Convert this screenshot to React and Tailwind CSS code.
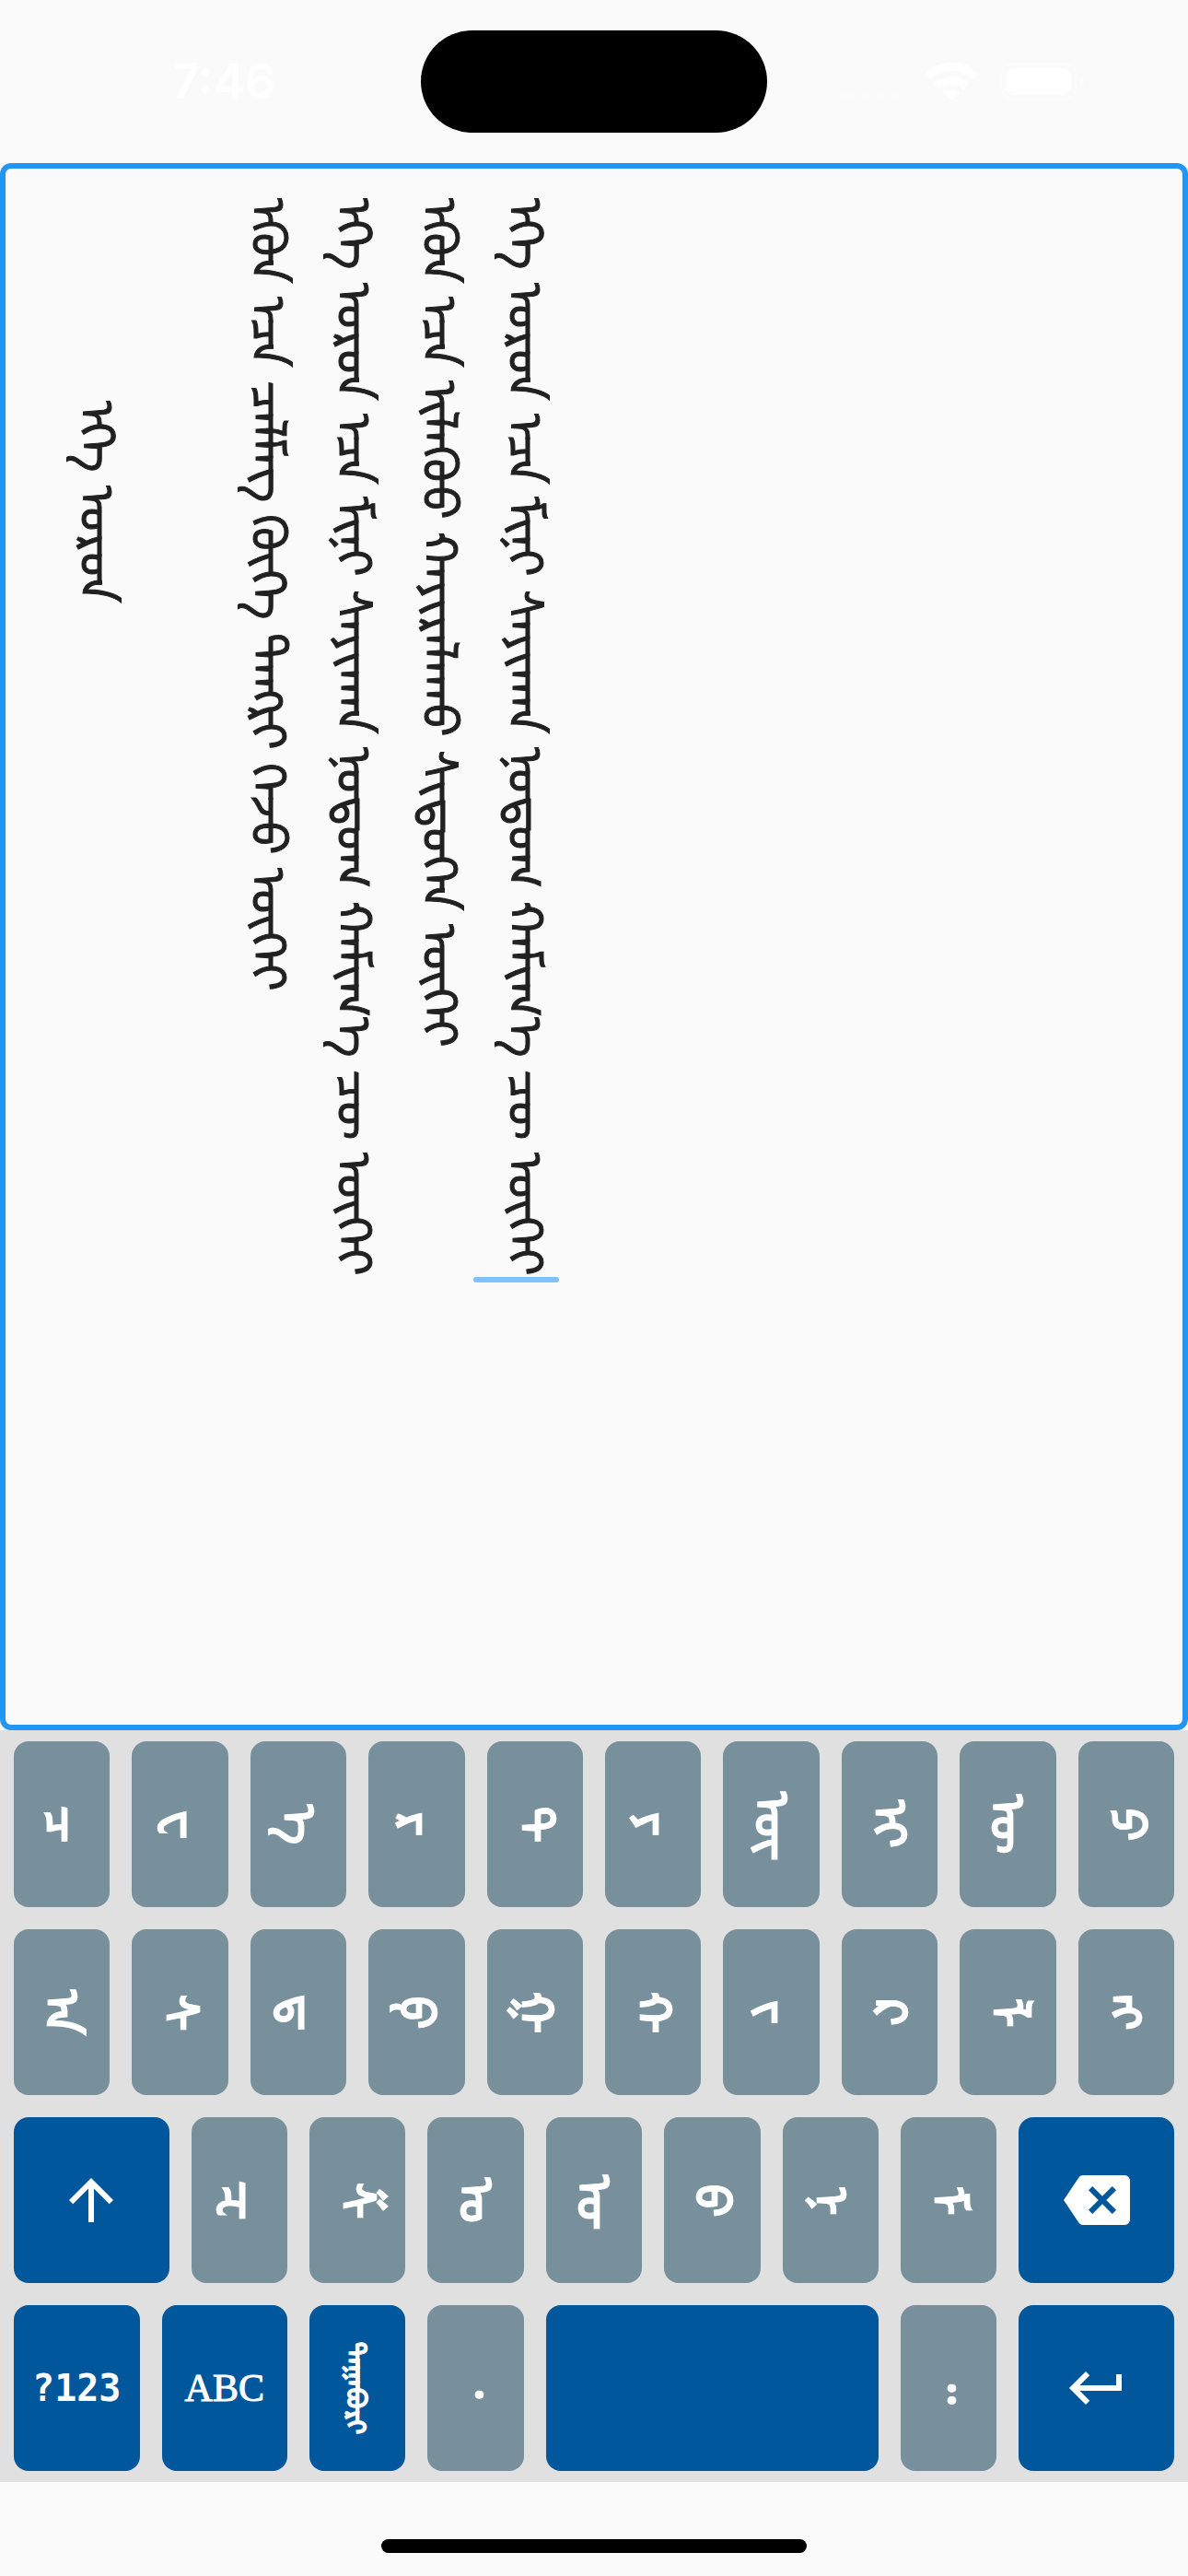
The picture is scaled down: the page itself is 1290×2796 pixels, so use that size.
import { useState } from "react";
import { MdArrowUpward, MdBackspace, MdKeyboardReturn } from "react-icons/md";

// A zero width joiner after a vowel keeps its initial form.
const ZWJ = "\u200d";

const TEXT = [
  "                ᠡᠬᠡ ᠣᠷᠣᠨ",
  "",
  "ᠡᠭᠦᠨ ᠡᠴᠡ ᠴᠡᠯᠮᠡᠭ ᠬᠥᠬᠡ ᠲᠡᠩᠷᠢ ᠭᠡᠵᠦ ᠦᠭᠡᠢ",
  "ᠡᠬᠡ ᠣᠷᠣᠨ ᠡᠴᠡ ᠮᠢᠨᠢ ᠰᠠᠶᠢᠬᠠᠨ ᠨᠤᠲᠤᠭ ᠬᠠᠮᠢᠭ᠎ᠠ᠋ ᠴᠦ ᠦᠭᠡᠢ",
  "ᠡᠭᠦᠨ ᠡᠴᠡ ᠢᠯᠡᠭᠦᠦ ᠬᠠᠶᠢᠷᠠᠯᠠᠬᠤ ᠰᠢᠲᠦᠭᠡᠨ ᠦᠭᠡᠢ",
  "ᠡᠬᠡ ᠣᠷᠣᠨ ᠡᠴᠡ ᠮᠢᠨᠢ ᠰᠠᠶᠢᠬᠠᠨ ᠨᠤᠲᠤᠭ ᠬᠠᠮᠢᠭ᠎ᠠ᠋ ᠴᠦ ᠦᠭᠡᠢ",
].join("\n");

const ROW_1 = ["ᠴ", "ᠸ", "ᠡ", "ᠷ", "ᠲ", "ᠶ", "ᠦ" + ZWJ, "ᠢ", "ᠥ", "ᠫ"];
const ROW_2 = ["ᠠ", "ᠰ", "ᠳ", "ᠹ", "ᠭ", "ᠬ", "ᠵ", "ᠺ", "ᠯ", "ᠩ"];
const ROW_3 = ["ᠽ", "ᠱ", "ᠤ", "ᠣ" + ZWJ, "ᠪ", "ᠨ", "ᠮ"];

function Key({ width = "w-[10%]", blue = false, label, onPress, children }) {
  return (
    <div className={`flex px-3 ${width}`}>
      <button
        type="button"
        aria-label={label}
        onClick={onPress}
        className={`flex h-[180px] w-full items-center justify-center rounded-2xl text-white ${
          blue ? "bg-[#01579b]" : "bg-[#78909c]"
        }`}
      >
        {children}
      </button>
    </div>
  );
}

function Letter({ children }) {
  return (
    <span className="pl-1 text-[52px] leading-none font-bold whitespace-nowrap [-webkit-text-stroke:1px] [writing-mode:vertical-lr]">
      {children}
    </span>
  );
}

function Row({ children }) {
  return <div className="flex px-[3px]">{children}</div>;
}

function StatusBar() {
  return (
    <header className="grid h-[177px] grid-cols-3 items-center">
      <time className="pl-[56px] text-center font-['Inter',sans-serif] text-[52px] leading-none font-semibold text-white">
        7:46
      </time>
      <div className="h-[111px] w-[376px] justify-self-center rounded-full bg-black" />
      <div className="flex items-center justify-end gap-6 pr-[111px]">
        <svg className="h-[43px] w-[66px]" viewBox="0 0 66 43" fill="#fbfbfb" aria-hidden="true">
          <circle cx="6" cy="37" r="5" />
          <circle cx="24" cy="37" r="5" />
          <circle cx="42" cy="37" r="5" />
          <circle cx="60" cy="37" r="5" />
        </svg>
        <svg className="h-[43px] w-[58px]" viewBox="0 0 58 43" fill="none" stroke="white" strokeWidth="9" aria-hidden="true">
          <path d="M3 16a37 37 0 0 1 52 0" />
          <path d="M13 27a23 23 0 0 1 32 0" />
          <path d="M29 42l-9-8a13 13 0 0 1 18 0z" fill="white" stroke="none" />
        </svg>
        <svg className="h-[43px] w-[93px]" viewBox="0 0 93 43" fill="none" aria-hidden="true">
          <rect x="2" y="2" width="80" height="39" rx="13" stroke="#fcfcfc" strokeWidth="3" />
          <rect x="6" y="7" width="71" height="29" rx="9" fill="white" />
          <path d="M87 15c6 3 6 10 0 13z" fill="#fcfcfc" />
        </svg>
      </div>
    </header>
  );
}

export default function App() {
  const [text, setText] = useState(TEXT);
  const add = (s) => () => setText((t) => t + s.replace(ZWJ, ""));
  return (
    <main className="flex min-h-screen flex-col bg-[#fafafa] font-['Noto_Sans',sans-serif]">
      <StatusBar />
      <section className="relative flex flex-1 rounded-xl border-6 border-[#2196f3]">
        <textarea
          aria-label="Text"
          spellCheck={false}
          value={text}
          onChange={(e) => setText(e.target.value)}
          className="w-full resize-none overflow-hidden bg-transparent pt-8 pl-[55px] text-[53px] leading-[93px] whitespace-pre text-[#212121] outline-none [-webkit-text-stroke:1px] [writing-mode:vertical-lr]"
        />
        <div className="absolute top-[1203px] left-[508px] h-[6px] w-[93px] rounded-full bg-[#7fc1f8]" />
      </section>
      <section className="flex flex-col gap-6 bg-[#e0e0e0] py-3">
        <Row>
          {ROW_1.map((c) => (
            <Key key={c} onPress={add(c)}><Letter>{c}</Letter></Key>
          ))}
        </Row>
        <Row>
          {ROW_2.map((c) => (
            <Key key={c} onPress={add(c)}><Letter>{c}</Letter></Key>
          ))}
        </Row>
        <Row>
          <Key width="w-[15%]" blue label="Shift"><MdArrowUpward className="size-[72px]" /></Key>
          {ROW_3.map((c) => (
            <Key key={c} onPress={add(c)}><Letter>{c}</Letter></Key>
          ))}
          <Key width="w-[15%]" blue label="Backspace" onPress={() => setText((t) => t.slice(0, -1))}>
            <MdBackspace className="size-[72px]" />
          </Key>
        </Row>
        <Row>
          <Key width="w-1/8" blue>
            <span className="font-['DejaVu_Sans_Mono',monospace] text-[40px] leading-none font-bold">?123</span>
          </Key>
          <Key width="w-1/8" blue>
            <span className="font-['Liberation_Serif',serif] text-[42px] leading-none [-webkit-text-stroke:1px]">ABC</span>
          </Key>
          <Key blue>
            <span className="text-[28px] leading-none font-bold whitespace-nowrap [-webkit-text-stroke:1px] [writing-mode:vertical-lr]">
              ᠳᠠᠭᠠᠪᠤᠷᠢ
            </span>
          </Key>
          <Key onPress={add("᠂")}><Letter>᠂</Letter></Key>
          <Key width="w-[30%]" blue label="Space" onPress={add(" ")} />
          <Key onPress={add("᠃")}><Letter>᠃</Letter></Key>
          <Key width="w-[15%]" blue label="Return" onPress={add("\n")}>
            <MdKeyboardReturn className="size-[72px]" />
          </Key>
        </Row>
      </section>
      <footer className="flex h-[102px] justify-center pt-[62px]">
        <div className="h-[15px] w-[462px] rounded-full bg-black" />
      </footer>
    </main>
  );
}
